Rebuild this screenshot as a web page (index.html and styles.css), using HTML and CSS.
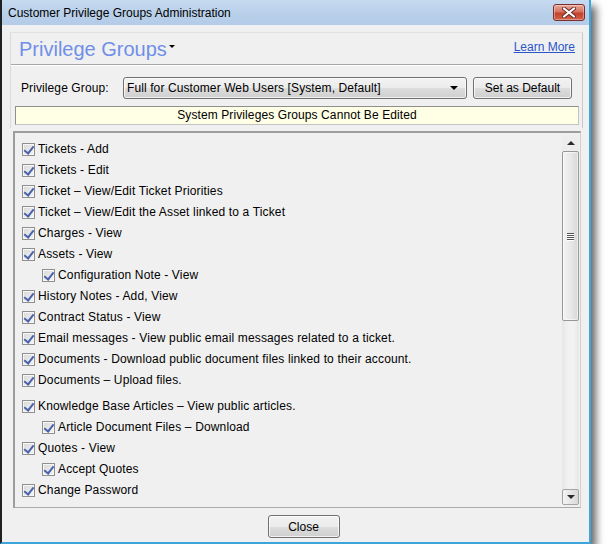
FILE: index.html
```html
<!DOCTYPE html>
<html>
<head>
<meta charset="utf-8">
<title>Customer Privilege Groups Administration</title>
<link rel="stylesheet" href="styles.css">
</head>
<body>
<div class="window">
  <div class="titlebar">
    <span class="title">Customer Privilege Groups Administration</span>
    <button class="close-x" aria-label="Close">
      <svg width="14" height="11" viewBox="0 0 14 11">
        <path d="M2 1.5 L12 9.5 M12 1.5 L2 9.5" stroke="#6b2a2a" stroke-width="4" stroke-linecap="round" fill="none"/>
        <path d="M2 1.5 L12 9.5 M12 1.5 L2 9.5" stroke="#ffffff" stroke-width="2.2" stroke-linecap="round" fill="none"/>
      </svg>
    </button>
  </div>
  <div class="client">
    <section class="panel">
      <header class="panel-head">
        <h1 class="heading">Privilege Groups<span class="caret"></span></h1>
        <a class="learn" href="#">Learn More</a>
      </header>
      <div class="panel-body">
        <div class="group-row">
          <span class="label">Privilege Group:</span>
          <div class="select"><span class="select-text">Full for Customer Web Users [System, Default]</span><span class="select-arrow"></span></div>
          <button class="btn default-btn">Set as Default</button>
        </div>
        <div class="notice">System Privileges Groups Cannot Be Edited</div>
      </div>
    </section>
    <div class="listbox">
      <ul class="items">
        <li class="item"><span class="cb"></span>Tickets - Add</li>
        <li class="item"><span class="cb"></span>Tickets - Edit</li>
        <li class="item"><span class="cb"></span>Ticket – View/Edit Ticket Priorities</li>
        <li class="item"><span class="cb"></span>Ticket – View/Edit the Asset linked to a Ticket</li>
        <li class="item"><span class="cb"></span>Charges - View</li>
        <li class="item"><span class="cb"></span>Assets - View</li>
        <li class="item sub"><span class="cb"></span>Configuration Note - View</li>
        <li class="item"><span class="cb"></span>History Notes - Add, View</li>
        <li class="item"><span class="cb"></span>Contract Status - View</li>
        <li class="item"><span class="cb"></span>Email messages - View public email messages related to a ticket.</li>
        <li class="item"><span class="cb"></span>Documents - Download public document files linked to their account.</li>
        <li class="item"><span class="cb"></span>Documents – Upload files.</li>
        <li class="item gap"><span class="cb"></span>Knowledge Base Articles – View public articles.</li>
        <li class="item sub"><span class="cb"></span>Article Document Files – Download</li>
        <li class="item"><span class="cb"></span>Quotes - View</li>
        <li class="item sub"><span class="cb"></span>Accept Quotes</li>
        <li class="item"><span class="cb"></span>Change Password</li>
      </ul>
      <div class="scrollbar">
        <div class="sb-up"><span class="tri-up"></span></div>
        <div class="sb-track">
          <div class="sb-thumb"><span class="grip"></span><span class="grip"></span><span class="grip"></span><span class="grip"></span></div>
        </div>
        <div class="sb-down"><span class="tri-down"></span></div>
      </div>
    </div>
    <div class="footer"><button class="btn close-btn">Close</button></div>
  </div>
</div>
</body>
</html>
```

FILE: styles.css
```css
* { box-sizing: border-box; }

html, body {
  margin: 0;
  padding: 0;
  background: #ffffff;
}

body {
  font-family: "Liberation Sans", Arial, sans-serif;
  font-size: 12px;
  color: #000;
}

.window {
  width: 591px;
  height: 544px;
  border-left: 2px solid #1f1f24;
  border-right: 2px solid #3ea4dc;
  border-bottom: 2px solid #3ea4dc;
  box-shadow: 5px 6px 8px rgba(0, 0, 0, 0.6);
  display: flex;
  flex-direction: column;
  background: #f0f0f0;
}

.titlebar {
  height: 25px;
  flex: none;
  display: flex;
  align-items: center;
  padding-left: 6px;
  background: linear-gradient(#c6daf0, #b8cfe9 60%, #b4cce8);
}

.title {
  font-size: 12px;
  color: #000;
}

.close-x {
  margin-left: auto;
  margin-right: 4px;
  width: 32px;
  height: 17px;
  padding: 0;
  border: 1px solid #7a2d2a;
  border-radius: 3px;
  background: linear-gradient(#e9a99a, #d6715f 45%, #c4422c 55%, #d0624a);
  display: flex;
  align-items: center;
  justify-content: center;
  box-shadow: inset 0 0 0 1px rgba(255, 255, 255, 0.35);
}

.client {
  flex: 1;
  display: flex;
  flex-direction: column;
  padding: 7px 6px 0 8px;
  background: #f0f0f0;
}

.panel {
  height: 96px;
  flex: none;
  border: 1px solid #dadada;
  border-top-color: #e2e2e2;
  border-right-color: #c9c9c9;
  border-bottom: none;
  display: flex;
  flex-direction: column;
}

.panel-head {
  height: 32px;
  flex: none;
  display: flex;
  align-items: center;
  justify-content: space-between;
  padding: 0 7px 0 8px;
  border-bottom: 1px solid #a7a7a7;
  box-shadow: 0 1px 0 #ffffff;
}

.heading {
  margin: 0;
  font-weight: normal;
  font-size: 20px;
  color: #6f8fe8;
  display: flex;
  align-items: center;
  padding-top: 1px;
}

.caret {
  width: 0;
  height: 0;
  margin-left: 2px;
  margin-top: -5px;
  border-left: 3px solid transparent;
  border-right: 3px solid transparent;
  border-top: 3px solid #000;
}

.learn {
  font-size: 12px;
  color: #2a55c8;
  text-decoration: underline;
  margin-top: -4px;
}

.panel-body {
  padding: 12px 3px 0 4px;
}

.group-row {
  display: flex;
  align-items: center;
  padding: 0 6px 0 6px;
  height: 22px;
}

.label {
  width: 102px;
  flex: none;
  letter-spacing: 0.1px;
}

.select {
  width: 344px;
  height: 22px;
  flex: none;
  display: flex;
  align-items: center;
  padding: 0 8px 0 3px;
  border: 1px solid #707070;
  border-radius: 3px;
  background: linear-gradient(#f3f3f3, #ebebeb 50%, #dddddd 51%, #cfcfcf);
  box-shadow: inset 0 0 0 1px rgba(255, 255, 255, 0.7);
}

.select-text {
  flex: 1;
  white-space: nowrap;
  letter-spacing: 0.1px;
}

.select-arrow {
  width: 0;
  height: 0;
  border-left: 4px solid transparent;
  border-right: 4px solid transparent;
  border-top: 4px solid #000;
}

.btn {
  font-family: "Liberation Sans", Arial, sans-serif;
  font-size: 12px;
  color: #000;
  border: 1px solid #707070;
  border-radius: 3px;
  background: linear-gradient(#f2f2f2, #ebebeb 50%, #dddddd 51%, #cfcfcf);
  box-shadow: inset 0 0 0 1px rgba(255, 255, 255, 0.75);
  padding: 0;
}

.default-btn {
  margin-left: 6px;
  width: 99px;
  height: 22px;
}

.notice {
  margin-top: 7px;
  height: 19px;
  line-height: 17px;
  text-align: center;
  background: #ffffe6;
  border: 1px solid #8f8f8f;
  border-right-color: #c3c3c3;
  border-bottom-color: #c3c3c3;
  letter-spacing: 0.1px;
}

.listbox {
  margin: 3px 2px 0 3px;
  height: 377px;
  flex: none;
  display: flex;
  border-top: 2px solid #9d9d9d;
  border-left: 2px solid #9d9d9d;
  border-right: 1px solid #d0d0d0;
  border-bottom: 1px solid #a9a9a9;
  background: #f0f0f0;
}

.items {
  flex: 1;
  list-style: none;
  margin: 0;
  padding: 5px 0 0 7px;
}

.item {
  height: 21px;
  display: flex;
  align-items: center;
  white-space: nowrap;
  letter-spacing: 0.15px;
}

.item.sub {
  padding-left: 20px;
}

.item.gap {
  margin-top: 5px;
}

.cb {
  position: relative;
  width: 13px;
  height: 13px;
  flex: none;
  margin-right: 3px;
  margin-top: 1px;
  border: 1px solid #8e8f8f;
  background: linear-gradient(135deg, #d9d9d9, #f4f4f4);
  box-shadow: inset 0 0 0 1px #f7f7f7;
}

.cb::after {
  content: "";
  position: absolute;
  left: 3px;
  top: 0px;
  width: 4px;
  height: 8px;
  border: solid #4a62ac;
  border-width: 0 2px 2px 0;
  transform: rotate(38deg);
}

.scrollbar {
  width: 17px;
  flex: none;
  margin: 2px 1px 2px 0;
  display: flex;
  flex-direction: column;
  background: #ededed;
}

.sb-up, .sb-down {
  height: 16px;
  flex: none;
  display: flex;
  align-items: center;
  justify-content: center;
}

.sb-down {
  border: 1px solid #a3a3a3;
  border-radius: 2px;
  background: linear-gradient(90deg, #f4f4f4, #e6e6e6 50%, #d9d9d9);
}

.tri-up {
  width: 0;
  height: 0;
  border-left: 4px solid transparent;
  border-right: 4px solid transparent;
  border-bottom: 4px solid #2a2a2a;
}

.tri-down {
  width: 0;
  height: 0;
  border-left: 4px solid transparent;
  border-right: 4px solid transparent;
  border-top: 4px solid #2a2a2a;
}

.sb-track {
  flex: 1;
  background: linear-gradient(90deg, #e6e6e6, #f2f2f2 40%, #f2f2f2 70%, #e6e6e6);
}

.sb-thumb {
  height: 170px;
  border: 1px solid #979797;
  border-radius: 2px;
  background: linear-gradient(90deg, #f3f3f3, #e8e8e8 50%, #d7d7d7);
  box-shadow: inset 0 0 0 1px rgba(255, 255, 255, 0.6);
  display: flex;
  flex-direction: column;
  align-items: center;
  justify-content: center;
  gap: 1px;
}

.grip {
  width: 7px;
  height: 1px;
  background: #555;
  box-shadow: 0 1px 0 #fff;
}

.footer {
  flex: 1;
  display: flex;
  justify-content: center;
  align-items: flex-start;
  padding: 7px 0 0 14px;
}

.close-btn {
  width: 72px;
  height: 23px;
}
```
